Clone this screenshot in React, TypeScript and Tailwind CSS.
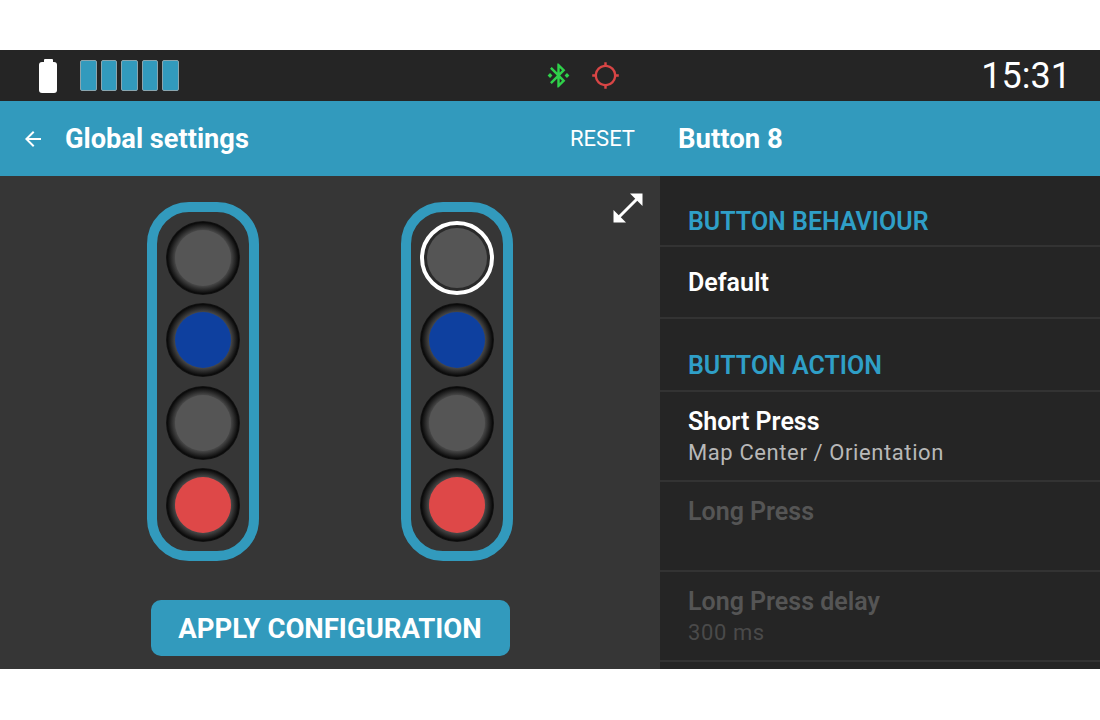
import { MdArrowBack, MdBluetoothConnected, MdGpsNotFixed } from 'react-icons/md';

type Lamp = 'gray' | 'blue' | 'red';

const LAMPS: Lamp[] = ['gray', 'blue', 'gray', 'red'];

const LAMP_COLORS: Record<Lamp, string> = {
  gray: 'bg-[#555555]',
  blue: 'bg-[#0e409f]',
  red: 'bg-[#de4848]',
};

function LampButton({ lamp, selected }: { lamp: Lamp; selected: boolean }) {
  if (selected) {
    return (
      <div className="flex h-[74px] w-[74px] items-center justify-center rounded-full border-[4px] border-white bg-[#2a2a2a]">
        <div className="h-[60px] w-[60px] rounded-full bg-[#555555]" />
      </div>
    );
  }
  return (
    <div className="flex h-[74px] w-[74px] items-center justify-center rounded-full bg-[radial-gradient(closest-side,#4c4c4c_74%,#0a0a0a_96%,#151515_100%)]">
      <div className={`h-[56px] w-[56px] rounded-full ${LAMP_COLORS[lamp]}`} />
    </div>
  );
}

function ButtonColumn({ selectedIndex }: { selectedIndex?: number }) {
  return (
    <div className="flex h-[359px] w-[112px] flex-col items-center justify-between rounded-[42px] border-[10px] border-[#329abd] py-[9px]">
      {LAMPS.map((lamp, i) => (
        <LampButton key={i} lamp={lamp} selected={i === selectedIndex} />
      ))}
    </div>
  );
}

function SectionTitle({ children, tall }: { children: string; tall?: boolean }) {
  return (
    <div
      className={`flex items-end border-b-2 border-[#333333] pl-[28px] text-[25px] leading-[30px] font-semibold text-[#2f9fc7] ${
        tall ? 'h-[73px] pb-[9px]' : 'h-[71px] pb-[8px]'
      }`}
    >
      {children}
    </div>
  );
}

function SettingRow({ title, value, disabled }: { title: string; value?: string; disabled?: boolean }) {
  return (
    <div className="flex h-[90px] flex-col border-b-2 border-[#333333] pt-[15px] pl-[28px]">
      <span className={`text-[25px] leading-[30px] font-semibold ${disabled ? 'text-[#555555]' : 'text-white'}`}>{title}</span>
      {value && (
        <span className={`text-[22px] leading-[32px] tracking-[0.6px] ${disabled ? 'text-[#4a4a4a]' : 'text-[#b8b8b8]'}`}>
          {value}
        </span>
      )}
    </div>
  );
}

export default function App() {
  return (
    <div className="h-[720px] w-[1100px] bg-white py-[50px] font-['Roboto',sans-serif]">
      <div className="flex h-[619px] flex-col overflow-hidden">
        <div className="relative flex h-[51px] shrink-0 items-center justify-between bg-[#252525] pr-[29px] pl-[39px]">
          <div className="flex items-center gap-[23px]">
            <div className="flex flex-col items-center">
              <div className="h-[3px] w-[9px] rounded-t-[1px] bg-white" />
              <div className="h-[31px] w-[18px] rounded-[3px] bg-white" />
            </div>
            <div className="flex gap-[4px]">
              {[0, 1, 2, 3, 4].map((i) => (
                <div key={i} className="h-[31px] w-[16.5px] rounded-[2px] border border-[#8ba5ae] bg-[#329abd]" />
              ))}
            </div>
          </div>
          <div className="absolute top-[11px] left-[544px] flex items-center gap-[18px]">
            <MdBluetoothConnected className="h-[29px] w-[29px] text-[#2fd14a]" />
            <MdGpsNotFixed className="h-[29px] w-[29px] text-[#d84545]" />
          </div>
          <span className="text-[36px] leading-none font-normal text-white">15:31</span>
        </div>

        <div className="flex h-[75px] shrink-0 bg-[#329abd] text-white">
          <div className="flex w-[660px] items-center pr-[25px] pl-[21px]">
            <MdArrowBack className="h-[24px] w-[24px]" />
            <span className="ml-[20px] flex-1 pt-[1px] text-[27.2px] font-bold">Global settings</span>
            <span className="text-[22px]">RESET</span>
          </div>
          <div className="flex flex-1 items-center pt-[1px] pl-[18px] text-[27.5px] font-bold">Button 8</div>
        </div>

        <div className="flex min-h-0 flex-1">
          <div className="relative flex w-[660px] flex-col items-center bg-[#363636] pt-[26px]">
            <svg className="absolute top-[17px] left-[613px]" width="30" height="30" viewBox="0 0 30 30">
              <path d="M5 25 L25 5" stroke="white" strokeWidth="3" />
              <path d="M17 0.5 H29.5 V13 Z" fill="white" />
              <path d="M13 29.5 H0.5 V17 Z" fill="white" />
            </svg>
            <div className="flex gap-[142px]">
              <ButtonColumn />
              <ButtonColumn selectedIndex={0} />
            </div>
            <div className="mt-[39px] flex h-[56px] w-[359px] items-center justify-center rounded-[10px] bg-[#329abd] pt-[1px] text-[27.5px] font-bold text-white">
              APPLY CONFIGURATION
            </div>
          </div>

          <div className="min-w-0 flex-1 bg-[#252525]">
            <SectionTitle>BUTTON BEHAVIOUR</SectionTitle>
            <div className="flex h-[72px] items-center border-b-2 border-[#333333] pt-[2px] pl-[28px] text-[25px] font-semibold text-white">
              Default
            </div>
            <SectionTitle tall>BUTTON ACTION</SectionTitle>
            <SettingRow title="Short Press" value="Map Center / Orientation" />
            <SettingRow title="Long Press" disabled />
            <SettingRow title="Long Press delay" value="300 ms" disabled />
          </div>
        </div>
      </div>
    </div>
  );
}
